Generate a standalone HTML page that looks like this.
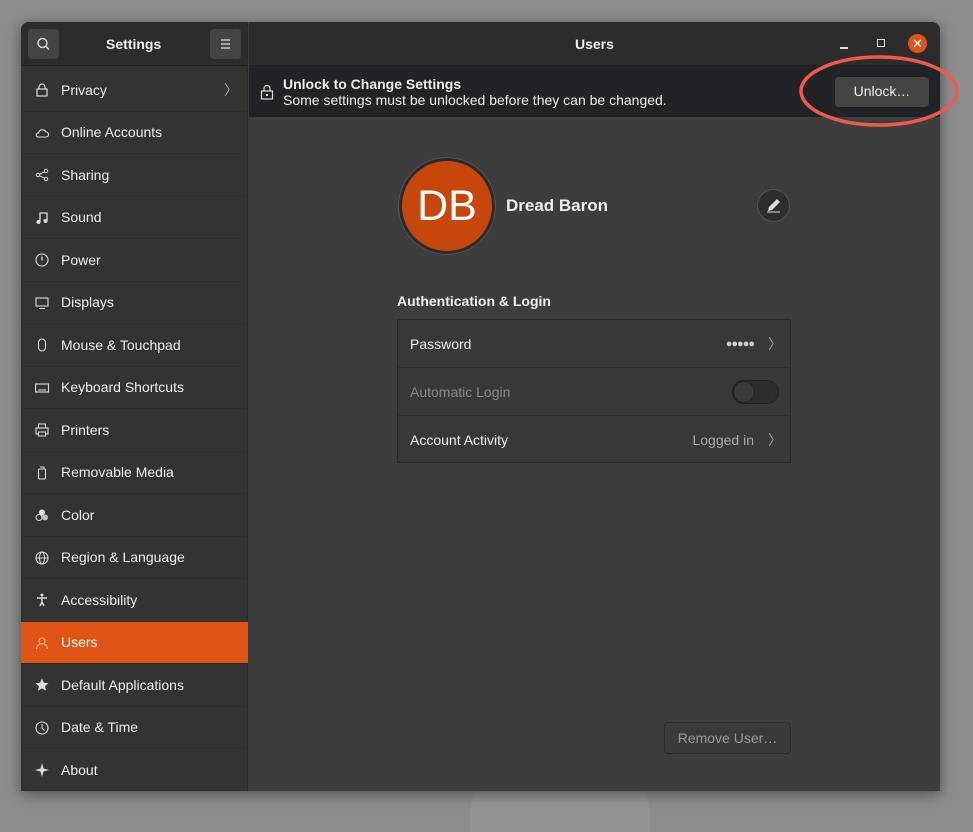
<!DOCTYPE html>
<html><head><style>
*{box-sizing:border-box;margin:0;padding:0}
body{width:973px;height:832px;background:#8d8d8d;font-family:"Liberation Sans","DejaVu Sans",sans-serif;position:relative;overflow:hidden;color:#eee}
.bgshape{position:absolute;bottom:0;left:470px;width:180px;height:60px;background:#939393;border-radius:40px 40px 0 0}
.win{position:absolute;left:21px;top:22px;width:919px;height:769px;background:#3d3d3d;border-radius:8px 8px 0 0;overflow:hidden;box-shadow:0 3px 14px rgba(0,0,0,.45)}
.side{position:absolute;left:0;top:0;width:227px;height:769px;background:#333;border-right:1px solid #2a2a2a}
.shead{height:44px;background:#2c2c2c;border-bottom:1px solid #222;position:relative}
.btn{position:absolute;top:7px;width:31px;height:30px;background:#444;border-radius:4px}
.title{position:absolute;top:14px;font-weight:bold;font-size:14px;color:#eee}
.row{position:absolute;left:0;width:227px;height:42.5px;font-size:14px;color:#eee;display:flex;align-items:center;padding-left:40px;border-bottom:1px solid #2e2e2e}
.row .ic{position:absolute;left:14px;top:14px;width:14px;height:14px}
.row.sel{background:#e05416;color:#fff}
.main{position:absolute;left:228px;top:0;right:0;height:769px}
.mhead{height:44px;background:#2c2c2c;border-bottom:1px solid #222;position:relative}
.info{position:absolute;top:44px;left:0;right:0;height:51px;background:#222326}
.list{position:absolute;left:148px;top:297px;width:394px;height:144px;border:1px solid #2a2a2a;background:#383838}
.li{height:48px;border-bottom:1px solid #2f2f2f;display:flex;align-items:center;padding:0 12px;font-size:14px;position:relative}
</style></head><body>
<div class="bgshape"></div>
<div class="win">
 <div class="side">
  <div class="shead">
   <div class="btn" style="left:7px"><svg width="31" height="30"><circle cx="14.5" cy="14" r="4.5" fill="none" stroke="#ddd" stroke-width="1.4"/><line x1="18" y1="17.5" x2="21" y2="20.5" stroke="#ddd" stroke-width="1.4"/></svg></div>
   <div class="title" style="left:85px">Settings</div>
   <div class="btn" style="left:189px"><svg width="31" height="30"><path d="M11 11h9M11 15h9M11 19h9" stroke="#ddd" stroke-width="1.2"/></svg></div>
  </div>
  <div class="row" style="top:47px">Privacy<span style="position:absolute;left:203px;color:#aaa">〉</span><svg class="ic" viewBox="0 0 14 14"><rect x="2" y="6" width="10" height="7" fill="none" stroke="#ddd" stroke-width="1.2"/><path d="M4 6V4a3 3 0 0 1 6 0v2" fill="none" stroke="#ddd" stroke-width="1.2"/></svg></div>
  <div class="row" style="top:89.5px">Online Accounts<svg class="ic" viewBox="0 0 14 14"><path d="M3 11h8a2.5 2.5 0 0 0 0-5 4 4 0 0 0-7.5 1A2 2 0 0 0 3 11z" fill="none" stroke="#ddd" stroke-width="1.1"/></svg></div>
  <div class="row" style="top:132px">Sharing<svg class="ic" viewBox="0 0 14 14"><circle cx="3" cy="7" r="1.7" fill="none" stroke="#ddd"/><circle cx="11" cy="3" r="1.7" fill="none" stroke="#ddd"/><circle cx="11" cy="11" r="1.7" fill="none" stroke="#ddd"/><path d="M4.5 6.2 9.5 3.8M4.5 7.8l5 2.4" stroke="#ddd"/></svg></div>
  <div class="row" style="top:174.5px">Sound<svg class="ic" viewBox="0 0 14 14"><path d="M5 11V2h7v8" fill="none" stroke="#ddd" stroke-width="1.3"/><circle cx="3.5" cy="11" r="2" fill="#ddd"/><circle cx="10.5" cy="10" r="2" fill="#ddd"/></svg></div>
  <div class="row" style="top:217px">Power<svg class="ic" viewBox="0 0 14 14"><circle cx="7" cy="7" r="6" fill="none" stroke="#ddd" stroke-width="1.1"/><path d="M7 3.5v4" stroke="#ddd" stroke-width="1.3"/></svg></div>
  <div class="row" style="top:259.5px">Displays<svg class="ic" viewBox="0 0 14 14"><rect x="1" y="2" width="12" height="8" fill="none" stroke="#ddd" stroke-width="1.1"/><path d="M4 12.5h6" stroke="#ddd"/></svg></div>
  <div class="row" style="top:302px">Mouse &amp; Touchpad<svg class="ic" viewBox="0 0 14 14"><rect x="3.5" y="1" width="7" height="12" rx="3.5" fill="none" stroke="#ddd" stroke-width="1.1"/></svg></div>
  <div class="row" style="top:344.5px">Keyboard Shortcuts<svg class="ic" viewBox="0 0 14 14"><rect x="0.5" y="3" width="13" height="8" fill="none" stroke="#ddd" stroke-width="1.1"/><path d="M3 9h8" stroke="#ddd"/></svg></div>
  <div class="row" style="top:387px">Printers<svg class="ic" viewBox="0 0 14 14"><rect x="1" y="5" width="12" height="6" fill="none" stroke="#ddd" stroke-width="1.1"/><rect x="3.5" y="1" width="7" height="4" fill="none" stroke="#ddd"/><rect x="3.5" y="9" width="7" height="4" fill="#333" stroke="#ddd"/></svg></div>
  <div class="row" style="top:429.5px">Removable Media<svg class="ic" viewBox="0 0 14 14"><rect x="3.5" y="3" width="7" height="10" rx="1" fill="none" stroke="#ddd" stroke-width="1.1"/><path d="M5 1h4v2" fill="none" stroke="#ddd"/></svg></div>
  <div class="row" style="top:472px">Color<svg class="ic" viewBox="0 0 14 14"><circle cx="7" cy="4.5" r="3" fill="#ddd"/><circle cx="4" cy="9.5" r="3" fill="none" stroke="#ddd"/><circle cx="10" cy="9.5" r="3" fill="#bbb"/></svg></div>
  <div class="row" style="top:514.5px">Region &amp; Language<svg class="ic" viewBox="0 0 14 14"><circle cx="7" cy="7" r="6" fill="none" stroke="#ddd" stroke-width="1.1"/><ellipse cx="7" cy="7" rx="2.5" ry="6" fill="none" stroke="#ddd"/><path d="M1 7h12" stroke="#ddd"/></svg></div>
  <div class="row" style="top:557px">Accessibility<svg class="ic" viewBox="0 0 14 14"><circle cx="7" cy="2" r="1.5" fill="#ddd"/><path d="M2 5h10M7 5v4l-2 4M7 9l2 4" fill="none" stroke="#ddd" stroke-width="1.4"/></svg></div>
  <div class="row sel" style="top:599.5px">Users<svg class="ic" viewBox="0 0 14 14"><circle cx="7" cy="5" r="3" fill="none" stroke="#ffb08a" stroke-width="1.1"/><path d="M1.5 13a5.5 5.5 0 0 1 11 0" fill="none" stroke="#ffb08a" stroke-width="1.1"/></svg></div>
  <div class="row" style="top:642px">Default Applications<svg class="ic" viewBox="0 0 14 14"><path d="M7 0.5l1.9 4.3 4.6.4-3.5 3 1.1 4.6L7 10.4 2.9 12.8 4 8.2.5 5.2l4.6-.4z" fill="#ddd"/></svg></div>
  <div class="row" style="top:684.5px">Date &amp; Time<svg class="ic" viewBox="0 0 14 14"><circle cx="7" cy="7" r="6" fill="none" stroke="#ddd" stroke-width="1.1"/><path d="M7 3v4l2.5 2.5" fill="none" stroke="#ddd"/></svg></div>
  <div class="row" style="top:727px;border:none">About<svg class="ic" viewBox="0 0 14 14"><path d="M7 0 8.5 5.5 14 7 8.5 8.5 7 14 5.5 8.5 0 7 5.5 5.5z" fill="#ddd"/></svg></div>
 </div>
 <div class="main">
  <div class="mhead">
   <div class="title" style="left:326px">Users</div>
   <div style="position:absolute;left:591px;top:25px;width:8px;height:1.5px;background:#ddd"></div>
   <div style="position:absolute;left:628px;top:17px;width:8px;height:8px;border:1.5px solid #ddd"></div>
   <div style="position:absolute;left:659px;top:12px;width:19px;height:19px;border-radius:50%;background:#e0531c;color:#fff;font-size:13px;text-align:center;line-height:19px">✕</div>
  </div>
  <div class="info">
   <svg style="position:absolute;left:11px;top:18px" width="14" height="16" viewBox="0 0 14 16"><rect x="1.5" y="7" width="11" height="8" fill="none" stroke="#ddd" stroke-width="1.2"/><path d="M4 7V4.5a3 3 0 0 1 6 0V7" fill="none" stroke="#ddd" stroke-width="1.2"/><rect x="6" y="10" width="2" height="2" fill="#ddd"/></svg>
   <div style="position:absolute;left:34px;top:10px;font-size:14px;font-weight:bold">Unlock to Change Settings</div>
   <div style="position:absolute;left:34px;top:26px;font-size:14px">Some settings must be unlocked before they can be changed.</div>
   <div style="position:absolute;left:586px;top:11px;width:94px;height:30px;background:#444;border-radius:4px;font-size:14px;text-align:center;line-height:29px">Unlock…</div>
  </div>
  <div style="position:absolute;left:149px;top:135px;width:98px;height:98px;border-radius:50%;background:#2b2b2b;border:1px solid #555"></div>
  <div style="position:absolute;left:153px;top:139px;width:90px;height:90px;border-radius:50%;background:#c7460b;font-size:43px;color:#fff;text-align:center;line-height:90px">DB</div>
  <div style="position:absolute;left:257px;top:174px;font-size:17px;font-weight:bold">Dread Baron</div>
  <div style="position:absolute;left:508px;top:167px;width:33px;height:33px;border-radius:50%;background:#2e2e2e;border:1px solid #555"><svg width="31" height="31"><path d="M10 21l1-4 8-8 3 3-8 8z" fill="#ddd"/><path d="M9 22h13" stroke="#ddd"/></svg></div>
  <div style="position:absolute;left:148px;top:271px;font-size:14px;font-weight:bold">Authentication &amp; Login</div>
  <div class="list">
   <div class="li">Password<span style="position:absolute;right:36px;font-size:11px;color:#ccc;letter-spacing:-1px">●●●●●</span><span style="position:absolute;right:8px;color:#aaa">〉</span></div>
   <div class="li" style="color:#888">Automatic Login<div style="position:absolute;right:11px;top:12px;width:47px;height:24px;border-radius:12px;background:#2e2e2e;border:1px solid #222"><div style="width:22px;height:22px;border-radius:50%;background:#3a3a3a;border:1px solid #222"></div></div></div>
   <div class="li" style="border:none">Account Activity<span style="position:absolute;right:36px;color:#aaa">Logged in</span><span style="position:absolute;right:8px;color:#aaa">〉</span></div>
  </div>
  <div style="position:absolute;left:415px;top:700px;width:127px;height:32px;border:1px solid #2c2c2c;border-radius:4px;background:#3a3a3a;color:#999;font-size:14px;text-align:center;line-height:30px">Remove User…</div>
 </div>
</div>
<svg style="position:absolute;left:796px;top:52px" width="170" height="80"><ellipse cx="83" cy="39" rx="78" ry="34" fill="none" stroke="#ef5a4e" stroke-width="3.5"/></svg>
</body></html>
